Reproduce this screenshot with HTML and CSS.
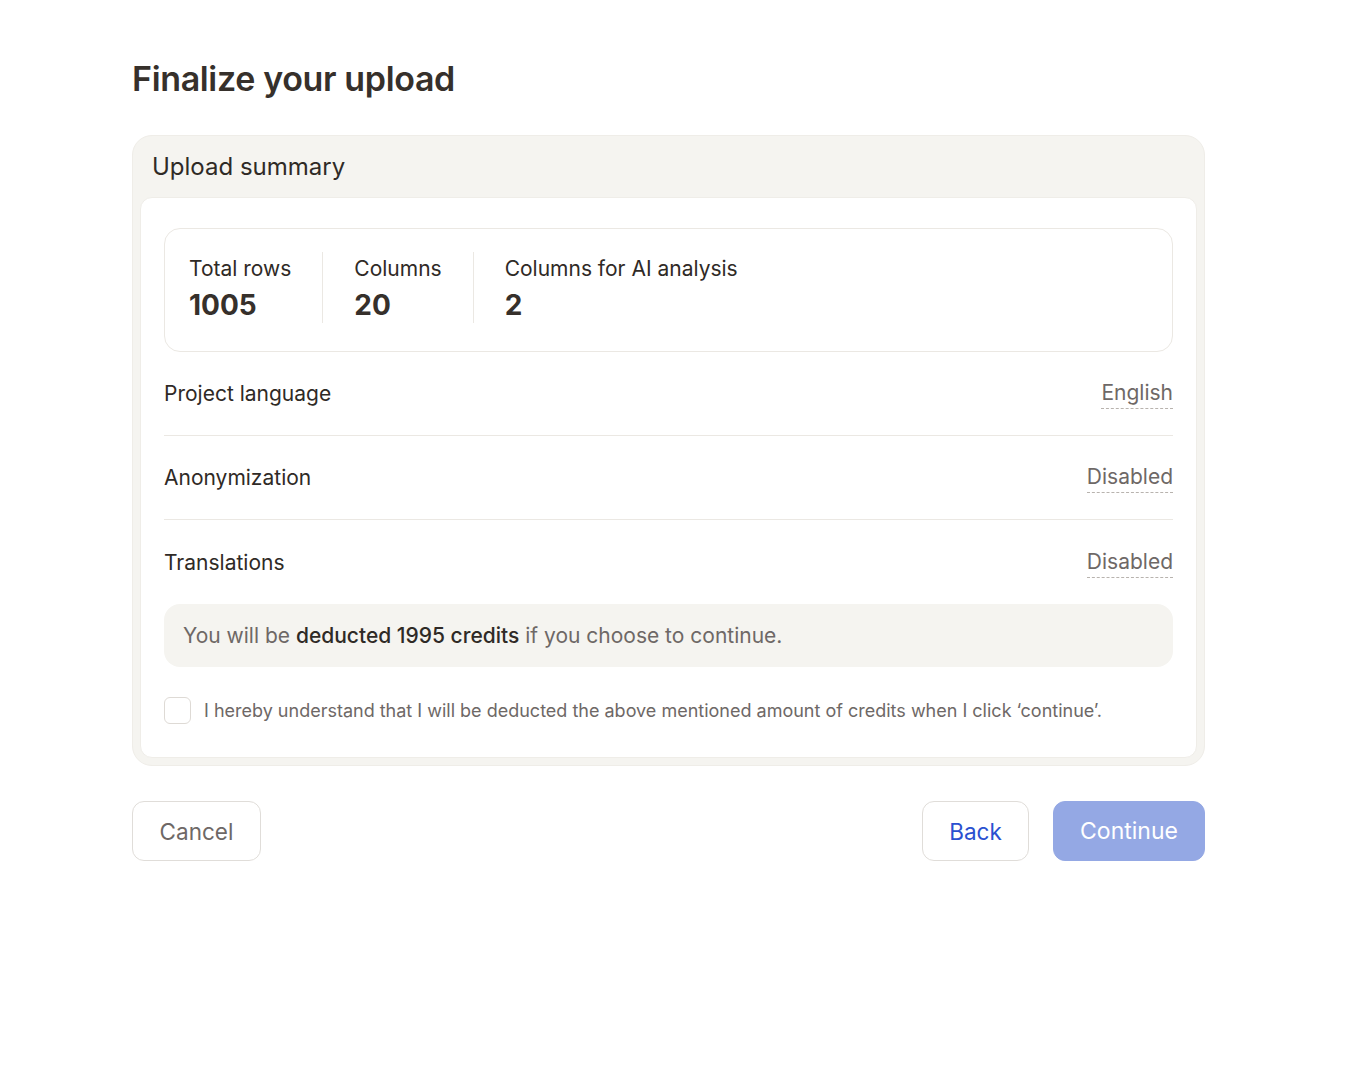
FILE: index.html
```html
<!DOCTYPE html>
<html lang="en">
<head>
<meta charset="utf-8">
<title>Finalize your upload</title>
<link rel="stylesheet" href="styles.css">
</head>
<body>
<main class="page">
  <h1 class="title">Finalize your upload</h1>
  <section class="card">
    <header class="card-head">Upload summary</header>
    <div class="card-body">
      <div class="stats">
        <div class="stat">
          <div class="stat-label">Total rows</div>
          <div class="stat-value">1005</div>
        </div>
        <div class="stat">
          <div class="stat-label">Columns</div>
          <div class="stat-value">20</div>
        </div>
        <div class="stat">
          <div class="stat-label">Columns for AI analysis</div>
          <div class="stat-value">2</div>
        </div>
      </div>
      <div class="row">
        <span class="row-label">Project language</span>
        <span class="row-value">English</span>
      </div>
      <div class="row">
        <span class="row-label">Anonymization</span>
        <span class="row-value">Disabled</span>
      </div>
      <div class="row row-last">
        <span class="row-label">Translations</span>
        <span class="row-value">Disabled</span>
      </div>
      <div class="notice">You will be <strong>deducted 1995 credits</strong> if you choose to continue.</div>
      <label class="confirm">
        <span class="checkbox"></span>
        <span class="confirm-text">I hereby understand that I will be deducted the above mentioned amount of credits when I click ‘continue’.</span>
      </label>
    </div>
  </section>
  <div class="actions">
    <button class="btn btn-cancel">Cancel</button>
    <div class="actions-right">
      <button class="btn btn-back">Back</button>
      <button class="btn btn-continue">Continue</button>
    </div>
  </div>
</main>
</body>
</html>
```

FILE: styles.css
```css
* { box-sizing: border-box; }
html, body {
  margin: 0;
  padding: 0;
  background: #ffffff;
}
body {
  font-family: Inter, "Noto Sans", "Liberation Sans", sans-serif;
  color: #2f2a26;
}
.page {
  width: 1073px;
  margin-left: 132px;
  padding-top: 59px;
}
.title {
  margin: 0;
  font-size: 34px;
  line-height: 40px;
  font-weight: 600;
  letter-spacing: -0.35px;
  color: #36302b;
}
.card {
  margin-top: 36px;
  background: #f5f4f0;
  border: 1px solid #efede8;
  border-radius: 20px;
  padding: 0 7px 7px;
}
.card-head {
  height: 61px;
  display: flex;
  align-items: center;
  padding-left: 12px;
  font-size: 24px;
  font-weight: 400;
  color: #2f2a26;
}
.card-body {
  background: #ffffff;
  border: 1px solid #efede8;
  border-radius: 12px;
  padding: 30px 23px 33px;
}
.stats {
  display: flex;
  border: 1px solid #ebe8e3;
  border-radius: 16px;
  padding: 23px 25px 28px 24px;
}
.stat {
  padding: 3px 31px 0;
  border-left: 1px solid #ebe8e3;
  height: 71px;
}
.stat:first-child {
  padding-left: 0;
  border-left: none;
}
.stat-label {
  font-size: 21px;
  line-height: 28px;
  color: #2f2a26;
}
.stat-value {
  margin-top: 4px;
  font-size: 28px;
  line-height: 36px;
  font-weight: 700;
  color: #36302b;
}
.row {
  height: 84px;
  display: flex;
  align-items: center;
  justify-content: space-between;
  border-bottom: 1px solid #ebe8e3;
}
.row-last {
  border-bottom: none;
}
.row-label {
  font-size: 21px;
  color: #2f2a26;
}
.row-value {
  font-size: 21px;
  color: #6e6866;
  padding-bottom: 3px;
  border-bottom: 1px dashed #b8b3ae;
  margin-top: 2px;
}
.notice {
  background: #f5f4f0;
  border-radius: 16px;
  height: 63px;
  display: flex;
  align-items: center;
  padding-left: 19px;
  font-size: 21px;
  color: #6e6866;
  white-space: pre;
}
.notice strong {
  font-weight: 500;
  color: #2f2a26;
}
.confirm {
  margin-top: 30px;
  display: flex;
  align-items: center;
  gap: 13px;
}
.checkbox {
  width: 27px;
  height: 27px;
  border: 1px solid #dedad5;
  border-radius: 6px;
  background: #fff;
  flex: none;
}
.confirm-text {
  font-size: 18px;
  color: #6e6866;
}
.actions {
  margin-top: 35px;
  display: flex;
  justify-content: space-between;
}
.actions-right {
  display: flex;
  gap: 24px;
}
.btn {
  font-family: Inter, "Noto Sans", "Liberation Sans", sans-serif;
  height: 60px;
  font-size: 22.5px;
  border-radius: 12px;
  border: 1px solid #e0ddd9;
  background: #fff;
  cursor: pointer;
}
.btn-cancel {
  width: 129px;
  color: #6e6866;
}
.btn-back {
  width: 107px;
  color: #2a50d0;
}
.btn-continue {
  width: 152px;
  font-size: 23px;
  background: #94a8e4;
  border-color: #94a8e4;
  color: #ffffff;
}
```
